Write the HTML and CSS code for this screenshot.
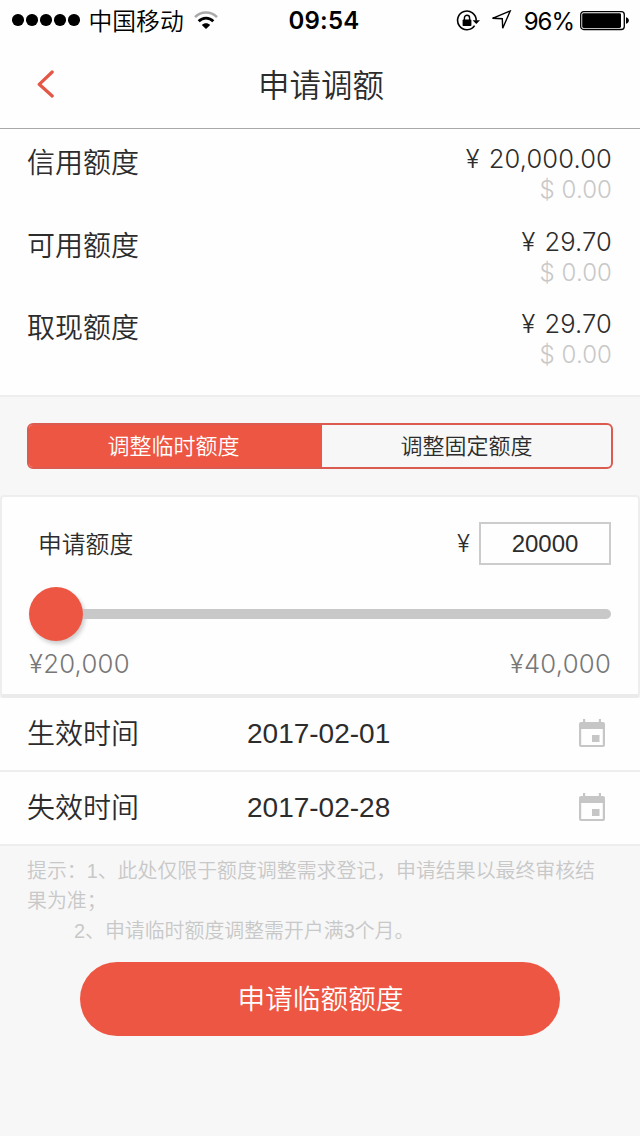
FILE: index.html
```html
<!DOCTYPE html>
<html lang="zh-CN">
<head>
<meta charset="utf-8">
<title>申请调额</title>
<link rel="stylesheet" href="styles.css">
</head>
<body>
<div class="screen">
  <div class="status">
    <div class="status-left">
      <div class="signal"><i></i><i></i><i></i><i></i><i></i></div>
      <span class="carrier">中国移动</span>
      <svg class="wifi" width="24" height="19" viewBox="0 0 24 19" fill="none">
        <path d="M1 6.2C7 -.1 17 -.1 23 6.2" stroke="#aaa" stroke-width="2.4"/>
        <path d="M4.7 10.2C8.8 6 15.2 6 19.3 10.2" stroke="#000" stroke-width="2.8"/>
        <path d="M12 18L7.8 13.9C10.3 11.7 13.7 11.7 16.2 13.9Z" fill="#000"/>
      </svg>
    </div>
    <span class="clock">09:54</span>
    <div class="status-right">
      <svg class="lock" width="24" height="22" viewBox="0 0 24 22" fill="none">
        <path d="M18.6 15.6A9.3 9.3 0 1 1 20.2 10.5" stroke="#000" stroke-width="1.6"/>
        <path d="M16.6 10.2H24L20.3 14Z" fill="#000"/>
        <rect x="6.6" y="9.6" width="8.8" height="6.4" rx=".8" fill="#000"/>
        <path d="M8.4 10V7.9a2.6 2.6 0 0 1 5.2 0V10" stroke="#000" stroke-width="1.4"/>
      </svg>
      <svg class="locate" width="21" height="20" viewBox="0 0 21 20" fill="none">
        <path d="M19.2 1L11.7 18.2L11.3 8.7L1.5 8.3Z" stroke="#000" stroke-width="1.4"/>
      </svg>
      <span class="percent">96%</span>
      <svg class="battery" width="49" height="20" viewBox="0 0 49 20">
        <rect x=".7" y=".7" width="43.6" height="17.8" rx="3" fill="none" stroke="#000" stroke-width="1.3"/>
        <rect x="2.2" y="2.3" width="38.8" height="14.6" rx="1.4"/>
        <path d="M46 6.2c3.8.6 3.8 6 0 6.6z"/>
      </svg>
    </div>
  </div>

  <div class="nav">
    <svg class="back" width="18" height="28" viewBox="0 0 18 28" fill="none">
      <path d="M15.2 2L2.2 14.3L15.2 26" stroke="#e45645" stroke-width="3.2" stroke-linecap="round" stroke-linejoin="round"/>
    </svg>
    <h1 class="title">申请调额</h1>
  </div>

  <div class="summary">
    <div class="limit"><span class="label">信用额度</span><div class="amounts"><span class="cny"><b>¥</b>20,000.00</span><span class="usd">$ 0.00</span></div></div>
    <div class="limit"><span class="label">可用额度</span><div class="amounts"><span class="cny"><b>¥</b>29.70</span><span class="usd">$ 0.00</span></div></div>
    <div class="limit"><span class="label">取现额度</span><div class="amounts"><span class="cny"><b>¥</b>29.70</span><span class="usd">$ 0.00</span></div></div>
  </div>

  <div class="tabs">
    <div class="tab active">调整临时额度</div>
    <div class="tab">调整固定额度</div>
  </div>

  <div class="card">
    <div class="apply">
      <span class="apply-label">申请额度</span>
      <span class="yen">¥</span>
      <div class="field">20000</div>
    </div>
    <div class="slider"><div class="knob"></div><div class="track"></div></div>
    <div class="range"><span>¥20,000</span><span>¥40,000</span></div>
  </div>

  <div class="date-row">
    <span class="label">生效时间</span><span class="date">2017-02-01</span>
    <svg class="calendar" width="28" height="30" viewBox="0 0 28 30">
      <path fill-rule="evenodd" d="M3 3H25Q27 3 27 5V26Q27 28 25 28H3Q1 28 1 26V5Q1 3 3 3ZM3.2 10V26H24.8V10Z"/>
      <rect x="5" y="0" width="2.2" height="4"/><rect x="20.8" y="0" width="2.2" height="4"/><rect x="14" y="16" width="7.5" height="7"/>
    </svg>
  </div>
  <div class="date-row">
    <span class="label">失效时间</span><span class="date">2017-02-28</span>
    <svg class="calendar" width="28" height="30" viewBox="0 0 28 30">
      <path fill-rule="evenodd" d="M3 3H25Q27 3 27 5V26Q27 28 25 28H3Q1 28 1 26V5Q1 3 3 3ZM3.2 10V26H24.8V10Z"/>
      <rect x="5" y="0" width="2.2" height="4"/><rect x="20.8" y="0" width="2.2" height="4"/><rect x="14" y="16" width="7.5" height="7"/>
    </svg>
  </div>

  <div class="notes">
    <p class="note">提示：1、此处仅限于额度调整需求登记，申请结果以最终审核结<br>果为准；</p>
    <p class="note second">2、申请临时额度调整需开户满3个月。</p>
  </div>
  <div class="submit">申请临额额度</div>
</div>
</body>
</html>
```

FILE: styles.css
```css
* { box-sizing: border-box; }
body {
  margin: 0;
  background: #f7f7f7;
  color: #2c2c2c;
  font-family: "Liberation Sans", "Noto Sans CJK SC", sans-serif;
  font-weight: 350;
}
svg { display: block; flex: none; }
.screen { width: 640px; height: 1136px; overflow: hidden; background: #f7f7f7; }

.status {
  display: grid;
  grid-template-columns: 1fr auto 1fr;
  align-items: center;
  height: 40px;
  padding: 0 11px 0 12px;
  background: #fefefe;
  color: #000;
}
.status-left, .status-right { display: flex; align-items: center; }
.status-right { justify-content: flex-end; }
.signal { display: flex; gap: 2.5px; }
.signal i { width: 11.5px; height: 11.5px; border-radius: 50%; background: #000; }
.carrier { margin-left: 9px; padding-top: 3px; font-size: 23.8px; line-height: 37px; }
.wifi { margin-left: 10px; }
.clock { padding: 2px 0 0 7px; font-family: Inter, sans-serif; font-size: 24px; font-weight: 600; line-height: 38px; letter-spacing: .2px; }
.lock { margin-top: 1px; }
.locate { margin-left: 11px; }
.percent { margin-left: 12px; padding-top: 3px; font-family: Inter, sans-serif; font-size: 24px; font-weight: 400; letter-spacing: -1px; line-height: 37px; }
.battery { margin-left: 6px; margin-top: 1px; }

.nav {
  display: grid;
  grid-template-columns: 60px 1fr 60px;
  align-items: center;
  height: 89px;
  border-bottom: 1px solid #a8a8a8;
  background: #fefefe;
}
.back { margin-left: 37px; }
.title { margin: 0; padding: 4px 0 0 2px; font-size: 31.5px; font-weight: 350; line-height: 84px; text-align: center; }

.summary { height: 268px; padding: 13px 28px 0; background: #fefefe; border-bottom: 2px solid #eee; }
.limit { display: flex; justify-content: space-between; height: 82.5px; }
.label { padding-top: 2px; font-size: 28px; line-height: 40px; margin-left: -1px; }
.amounts { display: flex; flex-direction: column; align-items: flex-end; font-family: Inter, sans-serif; font-weight: 300; }
.cny { font-size: 25.5px; line-height: 34px; letter-spacing: .15px; }
.cny b { font-weight: 300; margin-right: 9px; }
.usd { font-size: 24px; line-height: 28px; color: #c8c8c8; letter-spacing: .1px; }

.tabs { display: flex; height: 46px; margin: 26px 27px; border: 2px solid #dc5b50; border-radius: 6px; overflow: hidden; }
.tab { flex: 1; padding-top: 1px; font-size: 22px; line-height: 41px; text-align: center; }
.tab.active { flex: 0 0 293px; padding-right: 4px; background: #ee5644; color: #fff; }

.card { height: 203px; padding: 25px 27px 0; border: 2px solid #eee; border-bottom: 4px solid #ebebeb; border-radius: 4px; background: #fefefe; }
.apply { display: flex; align-items: center; padding-left: 9px; }
.apply-label { flex: 1; padding-top: 2px; font-size: 23.8px; line-height: 41px; }
.yen { margin-right: 9px; font-family: Inter, sans-serif; font-size: 24px; line-height: 30px; }
.field { width: 132px; height: 43px; border: 2px solid #ccc; font-size: 24px; line-height: 39px; text-align: center; }
.slider { display: flex; align-items: center; height: 54px; margin-top: 22px; }
.knob { width: 54px; height: 54px; border-radius: 50%; background: #ee5644; box-shadow: 2px 3px 4px #ccc; }
.track { flex: 1; height: 10px; border-radius: 0 5px 5px 0; background: #c8c8c8; }
.range { display: flex; justify-content: space-between; margin-top: 6px; font-family: Inter, sans-serif; font-weight: 300; font-size: 25.7px; line-height: 34px; color: #777; letter-spacing: .25px; }

.date-row { display: grid; grid-template-columns: 219px 1fr 28px; align-items: center; height: 74px; padding: 0 34px 0 28px; background: #fefefe; border-bottom: 2px solid #eee; }
.date { font-size: 28px; line-height: 40px; }
.calendar { fill: #c6c6c6; }

.notes { padding: 10px 28px 0; color: #c8c8c8; }
.note { margin: 0 0 0 -1px; font-size: 19.9px; line-height: 30px; white-space: nowrap; }
.second { padding-left: 47px; }
.submit { width: 480px; height: 74px; margin: 16px auto 0; padding: 1px 0 0 1px; border-radius: 37px; background: #ee5644; color: #fff; font-size: 27.7px; line-height: 74px; text-align: center; }
```
